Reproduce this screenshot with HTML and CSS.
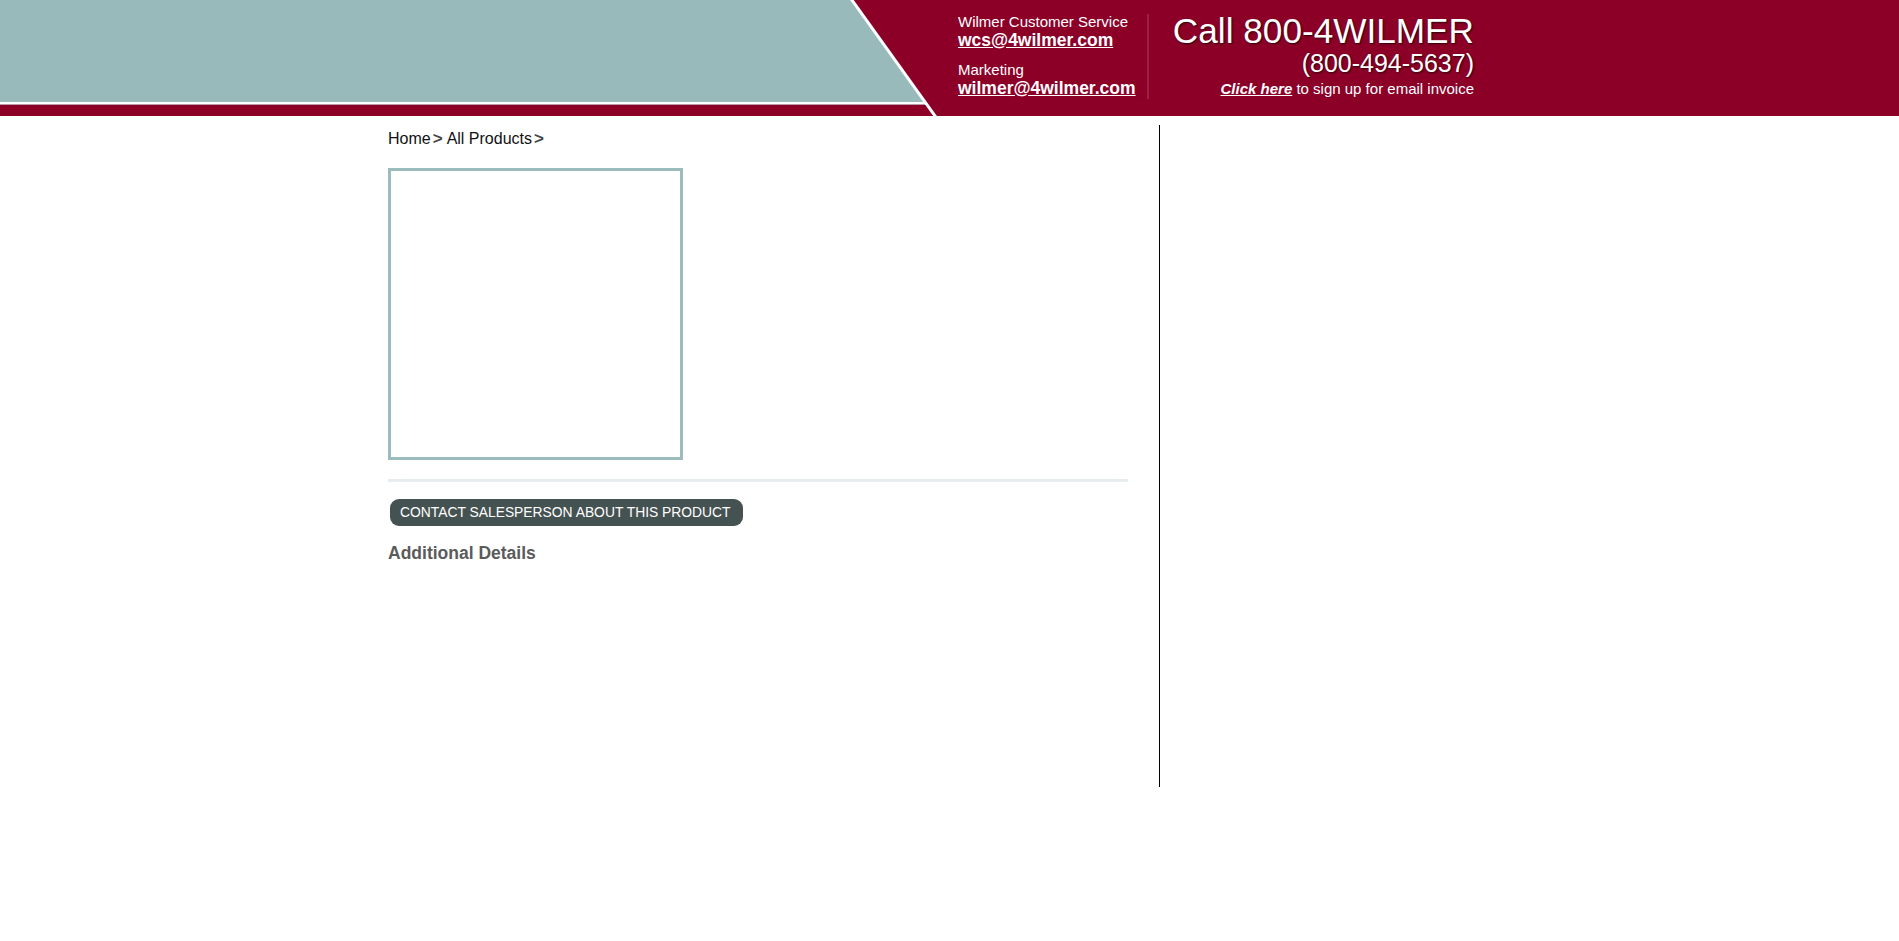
FILE: index.html
```html
<!DOCTYPE html>
<html lang="en">
<head>
<meta charset="utf-8">
<title>Wilmer - Product</title>
<link rel="stylesheet" href="styles.css">
</head>
<body>
<header class="header">
  <div class="swoosh">
    <svg width="940" height="116" viewBox="0 0 940 116" aria-hidden="true">
      <polygon points="0,0 852,0 926,102 0,102" fill="#98baba"/>
      <rect x="0" y="102" width="926" height="2" fill="#ffffff"/>
      <rect x="0" y="104" width="926" height="1" fill="#b89aa4"/>
      <line x1="850.5" y1="-2" x2="936.5" y2="118" stroke="#ffffff" stroke-width="3"/>
    </svg>
  </div>
  <div class="contacts">
    <div class="contact-group">
      <div class="contact-label">Wilmer Customer Service</div>
      <a class="contact-mail" href="#">wcs@4wilmer.com</a>
    </div>
    <div class="contact-group">
      <div class="contact-label">Marketing</div>
      <a class="contact-mail" href="#">wilmer@4wilmer.com</a>
    </div>
  </div>
  <div class="divider"></div>
  <div class="call">
    <div class="call-main">Call 800-4WILMER</div>
    <div class="call-phone">(800-494-5637)</div>
    <div class="call-invoice"><a href="#">Click here</a> to sign up for email invoice</div>
  </div>
</header>

<div class="page">
  <main class="content">
    <nav class="breadcrumb">
      <a href="#">Home</a><span class="sep">&gt;</span><a href="#">All Products</a><span class="sep">&gt;</span>
    </nav>
    <div class="product-image"></div>
    <div class="rule"></div>
    <button class="contact-btn" type="button">CONTACT SALESPERSON ABOUT THIS PRODUCT</button>
    <h2 class="details-title">Additional Details</h2>
  </main>
  <aside class="sidebar"></aside>
</div>
</body>
</html>
```
FILE: styles.css
```css
* {
  box-sizing: border-box;
}

body {
  margin: 0;
  background: #ffffff;
  font-family: "Liberation Sans", Arial, sans-serif;
  color: #222;
}

a {
  color: inherit;
}

/* ---------- header ---------- */
.header {
  display: flex;
  height: 116px;
  background: #8c0028;
  color: #ffffff;
}

.swoosh {
  flex: 0 0 940px;
  height: 116px;
}

.swoosh svg {
  display: block;
}

.contacts {
  flex: 0 0 189px;
  margin-left: 18px;
  padding-top: 14px;
  display: flex;
  flex-direction: column;
  gap: 13px;
}

.contact-label {
  font-size: 15px;
  line-height: 16px;
}

.contact-mail {
  display: block;
  margin-top: 2px;
  font-size: 17.5px;
  line-height: 17px;
  font-weight: bold;
  color: #ffffff;
  text-decoration: underline;
}

.divider {
  flex: 0 0 2px;
  margin-top: 14px;
  height: 85px;
  background: rgba(255, 255, 255, 0.13);
}

.call {
  flex: 0 0 325px;
  padding-top: 13px;
  text-align: right;
  display: flex;
  flex-direction: column;
  gap: 3px;
}

.call-main {
  font-size: 35.2px;
  line-height: 35px;
  text-shadow: 1px 1px 2px #2a0008;
}

.call-phone {
  font-size: 25px;
  line-height: 24px;
  text-shadow: 1px 1px 2px #2a0008;
}

.call-invoice {
  font-size: 15px;
  line-height: 17px;
  margin-top: 2px;
}

.call-invoice a {
  font-weight: bold;
  font-style: italic;
  color: #ffffff;
  text-decoration: underline;
}

/* ---------- page ---------- */
.page {
  display: flex;
  width: 1123px;
  margin: 9px auto 0;
}

.content {
  flex: 0 0 772px;
  height: 662px;
  padding: 5px 31px 0 0;
  border-right: 1px solid #000000;
}

.sidebar {
  flex: 1;
}

.breadcrumb {
  font-size: 16px;
  line-height: 18px;
  color: #111;
}

.breadcrumb a {
  text-decoration: none;
  color: #111;
}

.breadcrumb .sep {
  display: inline-block;
  margin: 0 4px 0 2px;
  color: #444;
  font-size: 17px;
  font-weight: bold;
}

.product-image {
  width: 295px;
  height: 292px;
  margin-top: 20px;
  border: 3px solid #9bbcbc;
  background: #ffffff;
}

.rule {
  height: 3px;
  margin-top: 19px;
  background: #e7edee;
}

.contact-btn {
  display: block;
  margin: 17px 0 0 2px;
  height: 27px;
  padding: 0 12px 0 10px;
  border: none;
  border-radius: 9px;
  background: #455252;
  color: #ffffff;
  font-family: "Liberation Sans", Arial, sans-serif;
  font-size: 13.85px;
  line-height: 27px;
  cursor: pointer;
}

.details-title {
  margin: 17px 0 0 0;
  font-size: 17.5px;
  line-height: 20px;
  font-weight: bold;
  color: #5b5b5b;
}
```
